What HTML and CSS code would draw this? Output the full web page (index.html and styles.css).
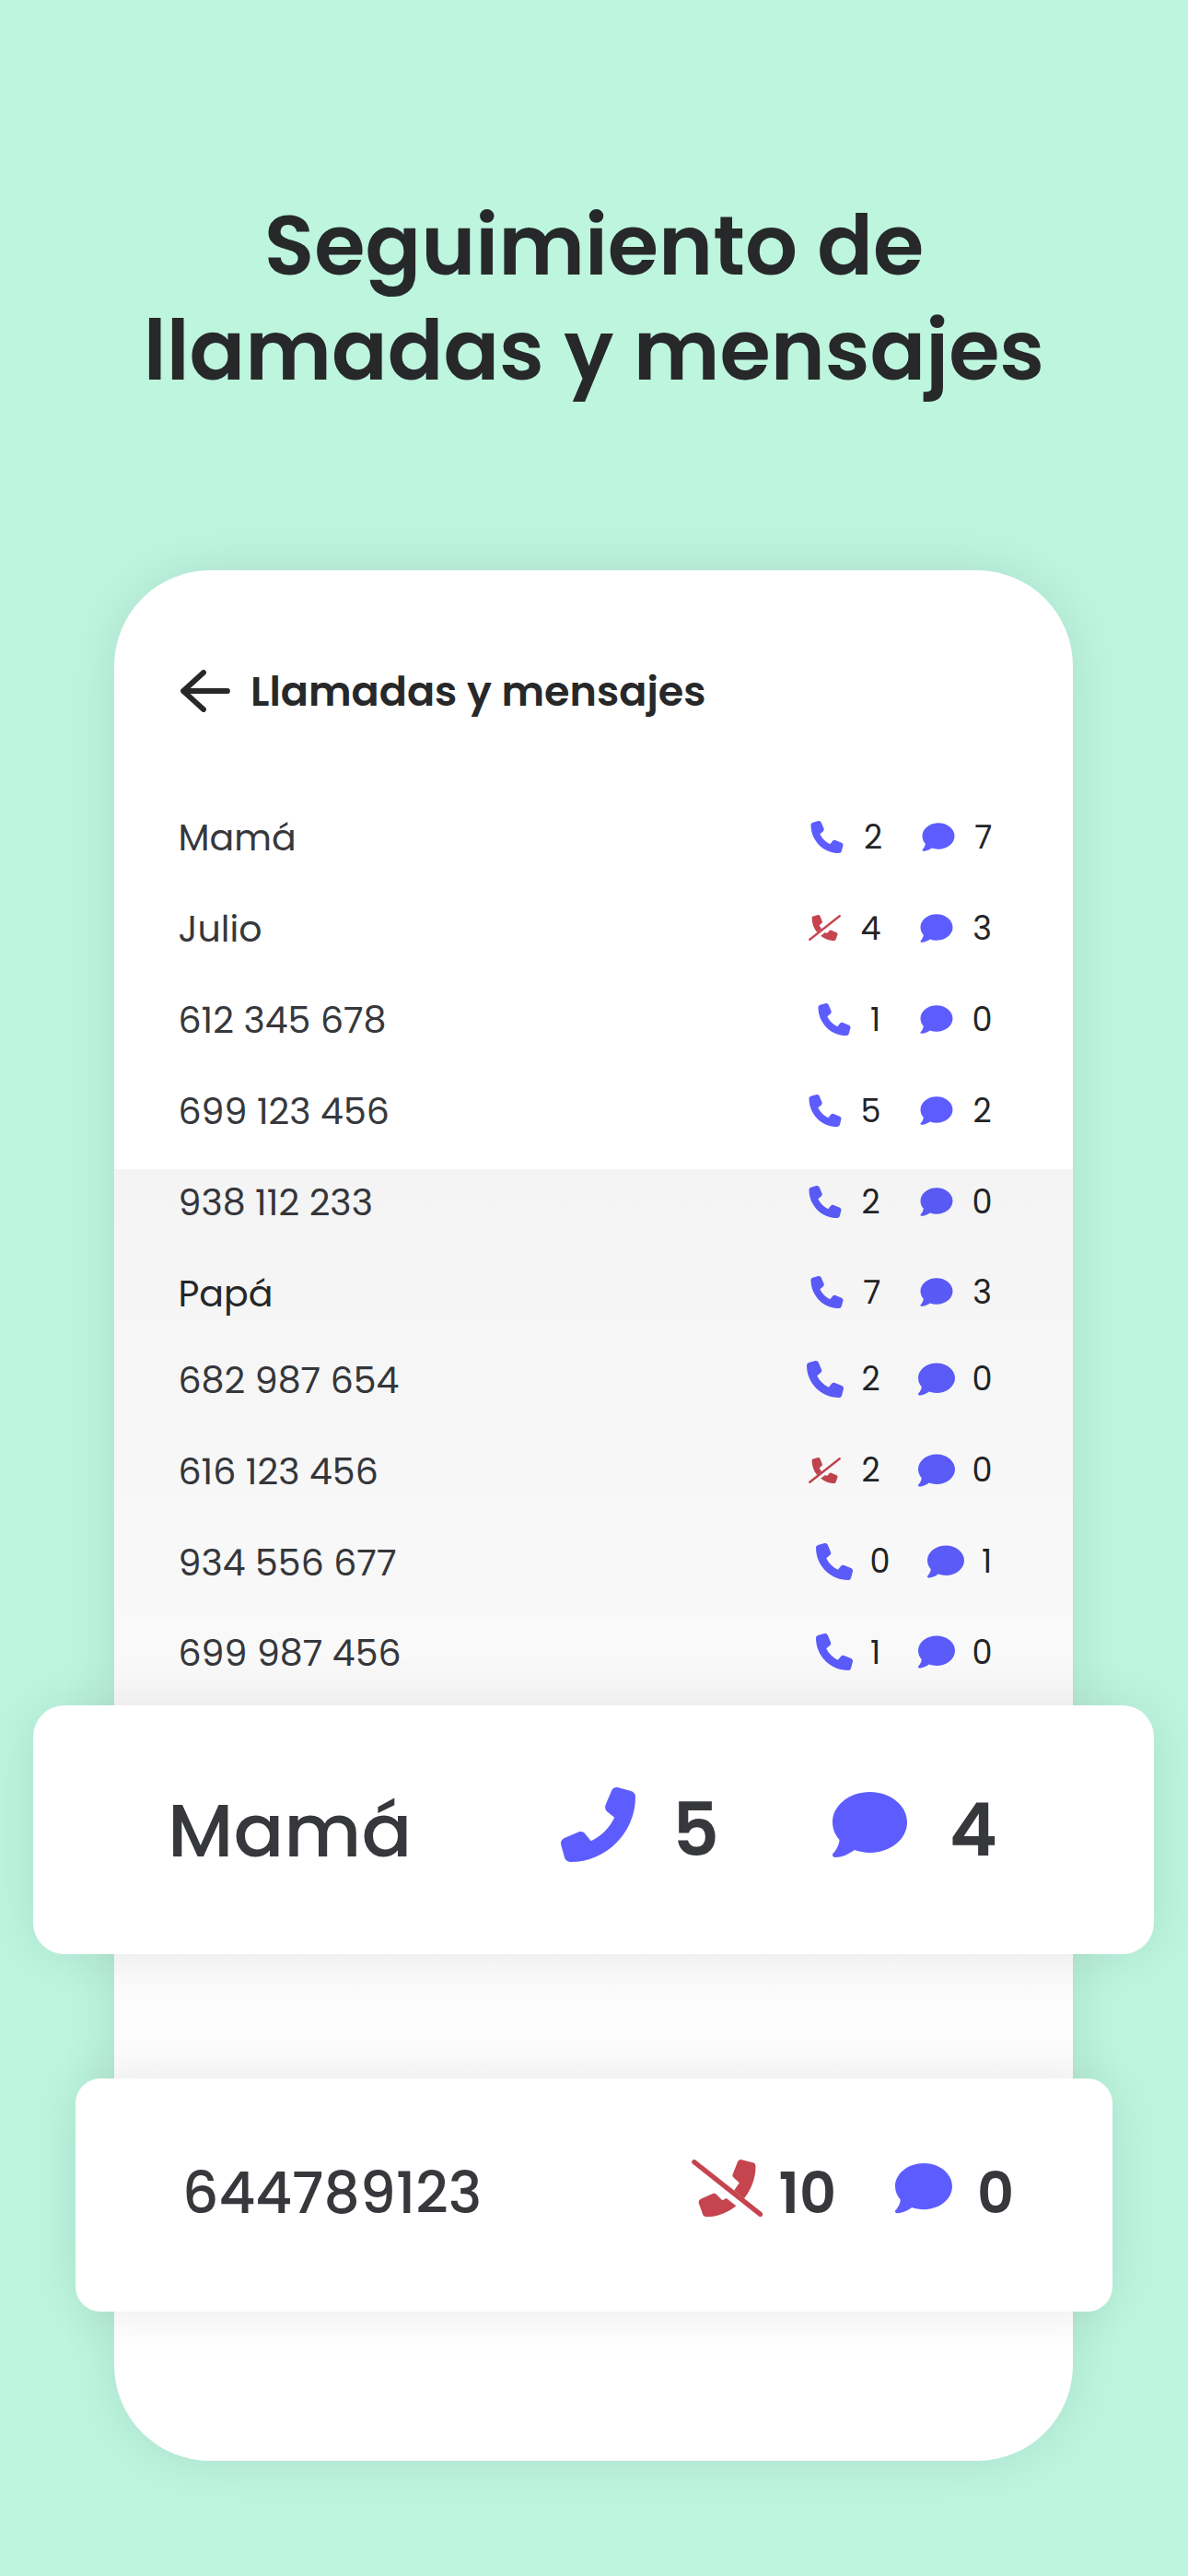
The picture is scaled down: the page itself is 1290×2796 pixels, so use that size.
FILE: index.html
```
<!DOCTYPE html>
<html lang="es">
<head>
    <meta charset="UTF-8">
    <meta name="viewport" content="width=device-width, initial-scale=1.0">
    <title>Seguimiento de llamadas y mensajes</title>
    <link rel="stylesheet" href="styles.css">
</head>
<body>
    <svg class="sprite" aria-hidden="true">
        <symbol id="phone" viewBox="0 0 512 512">
            <path d="M164.9 24.6c-7.7-18.6-28-28.5-47.4-23.2l-88 24C12.1 30.2 0 46 0 64C0 311.4 200.6 512 448 512c18 0 33.8-12.1 38.6-29.5l24-88c5.3-19.4-4.6-39.7-23.2-47.4l-96-40c-16.3-6.8-35.2-2.1-46.3 11.6L304.7 368C234.3 334.7 177.3 277.7 144 207.3L193.3 167c13.7-11.2 18.4-30 11.6-46.3l-40-96z"/>
        </symbol>
        <symbol id="missed" viewBox="0 0 640 512">
            <path d="M23 22L616 490" fill="none" stroke="currentColor" stroke-width="43" stroke-linecap="round"/>
            <path d="M471 349C540 262 574 160 574 62c0-18-9-30-25-35L450 2c-17-4-31 4-38 20l-42 105c-6 15-3 27 8 37l50 45-47 68z"/>
            <path d="M64 390c-3-18 4-31 19-38l106-46c16-6 29-2 39 11l47 49 37-20 87 68c-78 63-167 98-264 99-20 0-33-9-37-27z"/>
        </symbol>
        <symbol id="comment" viewBox="0 0 512 512">
            <path d="M512 240c0 114.9-114.6 208-256 208c-37.1 0-72.3-6.4-104.1-17.9c-11.9 8.7-31.3 20.6-54.3 30.6C73.6 471.1 44.7 480 16 480c-6.5 0-12.3-3.9-14.8-9.9c-2.5-6-1.1-12.8 3.4-17.4l.3-.3c.3-.3 .7-.7 1.3-1.4c1.1-1.2 2.8-3.1 4.9-5.7c4.1-5 9.6-12.4 15.2-21.6c10-16.6 19.5-38.4 21.4-62.9C17.7 326.8 0 285.1 0 240C0 125.1 114.6 32 256 32s256 93.1 256 208z"/>
        </symbol>
    </svg>

    <h1>Seguimiento de<br>llamadas y mensajes</h1>

    <main class="phone-card">
        <header class="top-bar">
            <svg class="back" viewBox="0 0 54 46"><path d="M25 3L3 23l22 20M3 23h48"/></svg>
            <h2>Llamadas y mensajes</h2>
        </header>

        <ul class="contacts">
            <li class="contact">
                <span class="name">Mamá</span>
                <svg class="icon"><use href="#phone"/></svg><span class="count">2</span>
                <svg class="icon"><use href="#comment"/></svg><span class="count seven">7</span>
            </li>
            <li class="contact">
                <span class="name">Julio</span>
                <svg class="icon missed"><use href="#missed"/></svg><span class="count">4</span>
                <svg class="icon"><use href="#comment"/></svg><span class="count">3</span>
            </li>
            <li class="contact">
                <span class="name">612 345 678</span>
                <svg class="icon"><use href="#phone"/></svg><span class="count one">1</span>
                <svg class="icon"><use href="#comment"/></svg><span class="count">0</span>
            </li>
            <li class="contact">
                <span class="name">699 123 456</span>
                <svg class="icon"><use href="#phone"/></svg><span class="count">5</span>
                <svg class="icon"><use href="#comment"/></svg><span class="count">2</span>
            </li>
            <li class="contact">
                <span class="name">938 112 233</span>
                <svg class="icon"><use href="#phone"/></svg><span class="count">2</span>
                <svg class="icon"><use href="#comment"/></svg><span class="count">0</span>
            </li>
            <li class="contact">
                <span class="name dark">Papá</span>
                <svg class="icon"><use href="#phone"/></svg><span class="count seven">7</span>
                <svg class="icon"><use href="#comment"/></svg><span class="count">3</span>
            </li>
        </ul>
        <ul class="contacts older">
            <li class="contact">
                <span class="name">682 987 654</span>
                <svg class="icon"><use href="#phone"/></svg><span class="count">2</span>
                <svg class="icon"><use href="#comment"/></svg><span class="count">0</span>
            </li>
            <li class="contact">
                <span class="name">616 123 456</span>
                <svg class="icon missed"><use href="#missed"/></svg><span class="count">2</span>
                <svg class="icon"><use href="#comment"/></svg><span class="count">0</span>
            </li>
            <li class="contact">
                <span class="name">934 556 677</span>
                <svg class="icon"><use href="#phone"/></svg><span class="count">0</span>
                <svg class="icon"><use href="#comment"/></svg><span class="count one">1</span>
            </li>
            <li class="contact">
                <span class="name">699 987 456</span>
                <svg class="icon"><use href="#phone"/></svg><span class="count one">1</span>
                <svg class="icon"><use href="#comment"/></svg><span class="count">0</span>
            </li>
        </ul>

        <section class="highlight highlight-mama">
            <span class="who">Mamá</span>
            <svg class="big-icon flip"><use href="#phone"/></svg><strong class="calls">5</strong>
            <svg class="big-icon"><use href="#comment"/></svg><strong class="messages">4</strong>
        </section>

        <section class="highlight highlight-missed">
            <span class="who">644789123</span>
            <svg class="big-icon missed"><use href="#missed"/></svg><strong class="calls">10</strong>
            <svg class="big-icon"><use href="#comment"/></svg><strong class="messages">0</strong>
        </section>
    </main>
</body>
</html>
```
FILE: styles.css
```
:root {
    --mint: #bdf5df;
    --ink: #27282a;
    --text: #37383c;
    --blue: #5d5dff;
    --red: #c5444e;
    --shadow: 0 0 60px rgba(0, 0, 0, 0.09);
}

* {
    box-sizing: border-box;
}

body {
    width: 1290px;
    height: 2796px;
    margin: 0;
    overflow: hidden;
    background: var(--mint);
    color: var(--text);
    font-family: Poppins, Inter, sans-serif;
}

.sprite {
    display: none;
}

h1 {
    margin: 0;
    padding-top: 210px;
    height: 619px;
    color: var(--ink);
    font-size: 89.5px;
    font-weight: 600;
    line-height: 114px;
    text-align: center;
}

.phone-card {
    position: relative;
    width: 1041px;
    height: 2052px;
    margin-left: 124px;
    padding: 82px 87.5px 0 69.5px;
    background: #fff;
    border-radius: 104px;
    box-shadow: var(--shadow);
}

/* grey veil over the lower part of the list */
.phone-card::after {
    content: "";
    position: absolute;
    top: 650px;
    left: 0;
    right: 0;
    height: 1170px;
    background: linear-gradient(rgba(0, 0, 0, 0.042), rgba(0, 0, 0, 0));
}

.top-bar {
    display: flex;
    align-items: center;
    gap: 22px;
    height: 98px;
    color: var(--ink);
}

.back {
    width: 54px;
    height: 46px;
    margin-left: 2.5px;
    fill: none;
    stroke: currentColor;
    stroke-width: 5.8;
    stroke-linecap: round;
    stroke-linejoin: round;
}

h2 {
    margin: 0;
    font-size: 44.5px;
    font-weight: 600;
}

.contacts {
    margin: 60px 0 0;
    padding: 0;
    list-style: none;
}

.contacts.older {
    margin-top: -5px;
}

.contact {
    display: flex;
    align-items: center;
    height: 98.9px;
}

.name {
    flex: 1;
    padding-top: 3px;
    font-size: 39.5px;
    white-space: nowrap;
}

.name.dark {
    color: var(--ink);
}

.icon {
    width: 40px;
    height: 35px;
    fill: var(--blue);
}

.older .icon {
    height: 40px;
}

.icon.missed,
.older .icon.missed {
    width: 35px;
    height: 28px;
    margin-right: 2.5px;
    transform: scaleX(-1);
}

.missed {
    fill: var(--red);
    color: var(--red);
}

.count {
    width: 22px;
    margin: 0 40px 0 19px;
    color: #232425;
    font-size: 35px;
    text-align: center;
}

.count.one {
    width: 12px;
}

.count.seven {
    width: 19.5px;
}

.count:last-child {
    margin-right: 0;
}

/* enlarged rows floating over the list */
.highlight {
    position: absolute;
    z-index: 1;
    display: flex;
    align-items: center;
    background: #fff;
    box-shadow: var(--shadow);
}

.highlight .who {
    flex: 1;
    font-weight: 500;
}

.highlight strong {
    font-weight: 600;
}

.big-icon {
    fill: var(--blue);
}

.big-icon.missed {
    fill: var(--red);
}

.highlight-mama {
    top: 1232px;
    left: -88px;
    width: 1217px;
    height: 270px;
    padding: 0 170px 0 146px;
    border-radius: 34px;
    font-size: 79px;
}

.highlight-mama .who {
    font-size: 81px;
}

.highlight-mama .big-icon {
    width: 81px;
    height: 81px;
    margin-bottom: 11px;
}

.highlight-mama .flip {
    transform: scaleX(-1);
}

.highlight-mama .calls {
    margin: 0 123px 0 40px;
}

.highlight-mama .messages {
    margin-left: 46px;
}

.highlight-missed {
    top: 1637px;
    left: -42px;
    width: 1126px;
    height: 253px;
    padding: 0 107px 5px 116px;
    border-radius: 27px;
    font-size: 62px;
}

.highlight-missed .who {
    font-size: 61.5px;
}

.highlight-missed .big-icon {
    width: 62px;
    height: 62px;
    margin-bottom: 10px;
}

.highlight-missed .big-icon.missed {
    width: 77.5px;
}

.highlight-missed .calls {
    margin: 0 64px 0 17px;
}

.highlight-missed .messages {
    margin-left: 27px;
}
```
